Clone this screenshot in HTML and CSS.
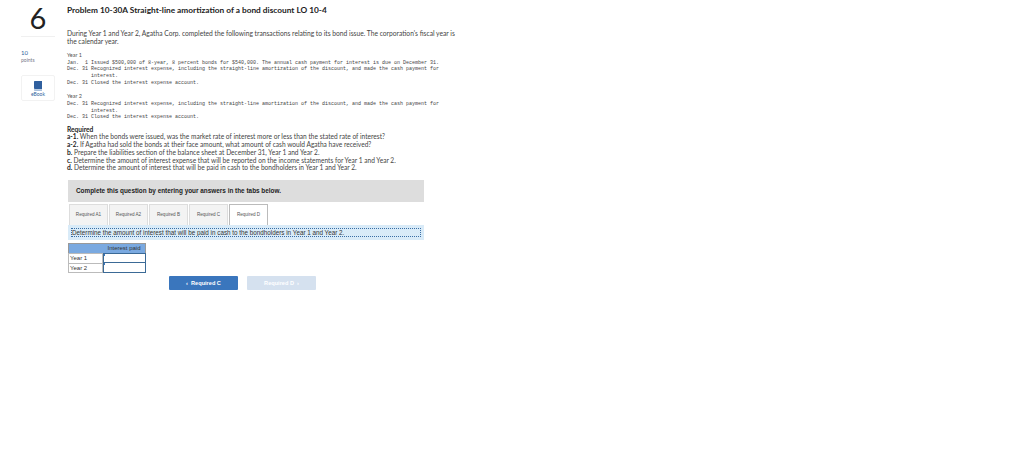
FILE: index.html

```html
<!DOCTYPE html>
<html lang="en">
<head>
  <meta charset="UTF-8" />
  <title>Problem 10-30A</title>
  <link rel="stylesheet" href="styles.css">
</head>
<body>
  <div class="page">
    <div class="side">
      <div class="num-card">6</div>
      <div class="points"><span class="points-num">10</span><br />points</div>
      <div class="ebook">
        <svg width="8" height="10" viewBox="0 0 8 10">
          <path d="M1 0H8V8H1.2C.5 8 0 7.6 0 7V1C0 .4 .4 0 1 0Z" fill="#2f5f9e" />
          <path d="M0 7.4C0 8 .5 8.3 1.2 8.3H8V10H1.2C.5 10 0 9.6 0 9Z" fill="#a9c0dc" />
        </svg>
        <div>eBook</div>
      </div>
    </div>
    <div class="main">
      <h1 class="title">Problem 10-30A Straight-line amortization of a bond discount LO 10-4</h1>
      <p class="intro">During Year 1 and Year 2, Agatha Corp. completed the following transactions relating to its bond issue. The corporation's fiscal year is the calendar year.</p>

      <div class="year">Year 1</div>
      <pre class="entries">Jan.  1 Issued $500,000 of 8-year, 8 percent bonds for $540,000. The annual cash payment for interest is due on December 31.
Dec. 31 Recognized interest expense, including the straight-line amortization of the discount, and made the cash payment for
        interest.
Dec. 31 Closed the interest expense account.</pre>

      <div class="year">Year 2</div>
      <pre class="entries">Dec. 31 Recognized interest expense, including the straight-line amortization of the discount, and made the cash payment for
        interest.
Dec. 31 Closed the interest expense account.</pre>

      <div class="required">
        <b>Required</b><br />
        <b>a-1.</b> When the bonds were issued, was the market rate of interest more or less than the stated rate of interest?<br />
        <b>a-2.</b> If Agatha had sold the bonds at their face amount, what amount of cash would Agatha have received?<br />
        <b>b.</b> Prepare the liabilities section of the balance sheet at December 31, Year 1 and Year 2.<br />
        <b>c.</b> Determine the amount of interest expense that will be reported on the income statements for Year 1 and Year 2.<br />
        <b>d.</b> Determine the amount of interest that will be paid in cash to the bondholders in Year 1 and Year 2.
      </div>

      <div class="banner">Complete this question by entering your answers in the tabs below.</div>

      <div class="tabs">
        <div class="tab">Required A1</div>
        <div class="tab">Required A2</div>
        <div class="tab">Required B</div>
        <div class="tab">Required C</div>
        <div class="tab active">Required D</div>
      </div>
      <div class="prompt"><div class="prompt-inner">Determine the amount of interest that will be paid in cash to the bondholders in Year 1 and Year 2.</div></div>

      <div class="answers">
        <div class="corner"></div>
        <div class="head">Interest paid</div>
        <div class="label">Year 1</div>
        <div class="cell"></div>
        <div class="label">Year 2</div>
        <div class="cell"></div>
      </div>

      <div class="nav">
        <div class="btn prev">&lsaquo;&nbsp;&nbsp;Required C</div>
        <div class="btn next">Required D&nbsp;&nbsp;&rsaquo;</div>
      </div>
    </div>
  </div>
</body>
</html>
```

FILE: styles.css

```css
body {
  margin: 0;
  background-color: #fff;
  color: #333;
  font-family: "Lato", "Liberation Sans", sans-serif;
}

.page {
  display: flex;
  align-items: flex-start;
  padding-left: 21px;
  gap: 12px;
}

.side {
  width: 34px;
  flex-shrink: 0;
}

.num-card {
  height: 37px;
  border-bottom: 1px solid #f0f0f0;
  box-sizing: border-box;
  text-align: center;
  font-size: 29px;
  font-weight: 400;
  line-height: 36px;
  color: #222;
}

.points {
  margin-top: 12px;
  font-size: 5px;
  line-height: 7px;
  color: #778;
}

.points-num {
  color: #2f5f9e;
  font-size: 6px;
}

.ebook {
  margin-top: 11px;
  height: 26px;
  border: 1px solid #f2f2f2;
  border-radius: 2px;
  box-sizing: border-box;
  text-align: center;
  padding-top: 5px;
  font-size: 5px;
  line-height: 7px;
  color: #2f5f9e;
}

.ebook svg {
  display: block;
  margin: 0 auto;
}

.main {
  width: 392px;
  flex-shrink: 0;
}

.title {
  margin: 6px 0 0;
  font-size: 8.3px;
  line-height: 9px;
  font-weight: 700;
  color: #222;
}

.intro {
  margin: 15px 0 0;
  font-size: 6.7px;
  line-height: 7.5px;
  color: #444;
}

.year {
  margin-top: 6px;
  margin-bottom: 0.8px;
  font-size: 5.5px;
  line-height: 8px;
  color: #555;
}

.entries {
  margin: 0;
  font-family: "Liberation Mono", monospace;
  font-size: 5px;
  line-height: 6.6px;
  color: #444;
}

.required {
  margin-top: 5px;
  font-size: 6.6px;
  line-height: 7.7px;
  color: #444;
}

.required b {
  color: #222;
}

.banner {
  margin-top: 7.6px;
  margin-left: 1px;
  width: 356px;
  height: 22px;
  background-color: #ddd;
  box-sizing: border-box;
  padding: 0 8px;
  font-family: "Liberation Sans", sans-serif;
  font-size: 6.4px;
  font-weight: 700;
  line-height: 21px;
  color: #222;
}

.tabs {
  display: flex;
  gap: 1px;
  margin-top: 2px;
  margin-left: 2px;
  height: 21px;
}

.tab {
  width: 39px;
  box-sizing: border-box;
  background-color: #f3f3f3;
  border: 1px solid #ddd;
  border-bottom: none;
  text-align: center;
  font-family: "Liberation Sans", sans-serif;
  font-size: 4.6px;
  line-height: 19px;
  color: #555;
}

.tab.active {
  background-color: #fff;
  border-color: #bbb;
}

.prompt {
  margin-left: 1px;
  width: 356px;
  height: 15px;
  background-color: #d9ebf8;
  box-sizing: border-box;
  padding: 3px;
}

.prompt-inner {
  box-sizing: border-box;
  height: 9px;
  border: 1px dotted #3a6ea5;
  font-family: "Liberation Sans", sans-serif;
  font-size: 6.3px;
  line-height: 7px;
  color: #333;
  white-space: nowrap;
  overflow: hidden;
}

.answers {
  display: grid;
  grid-template-columns: 35px 43px;
  grid-template-rows: 10px 10px 10px;
  margin: 3px 0 0 1px;
  width: 78px;
  font-family: "Liberation Sans", sans-serif;
  font-size: 6px;
  line-height: 8px;
}

.corner,
.head {
  background-color: #7aa9e0;
  border: 1px solid #999;
  border-bottom: none;
}

.corner {
  border-right: none;
}

.head {
  text-align: center;
  border-left: none;
  color: #333;
}

.label {
  border: 1px solid #bbb;
  border-bottom: none;
  padding-left: 1px;
  color: #333;
}

.label:nth-last-child(2) {
  border-bottom: 1px solid #bbb;
}

.cell {
  border: 1px solid #3b6a96;
  background: linear-gradient(#3a76bd, #3a76bd) 0 0 / 1px 2px no-repeat;
}

.cell:last-child {
  border-top: none;
}

.nav {
  display: flex;
  gap: 9px;
  margin-top: 3px;
  margin-left: 102px;
}

.btn {
  width: 69px;
  height: 14px;
  border-radius: 1px;
  text-align: center;
  font-family: "Liberation Sans", sans-serif;
  font-size: 5.6px;
  font-weight: 700;
  line-height: 14px;
  color: #fff;
}

.prev {
  background-color: #3a76bd;
}

.next {
  background-color: #d5e1ef;
}
```
